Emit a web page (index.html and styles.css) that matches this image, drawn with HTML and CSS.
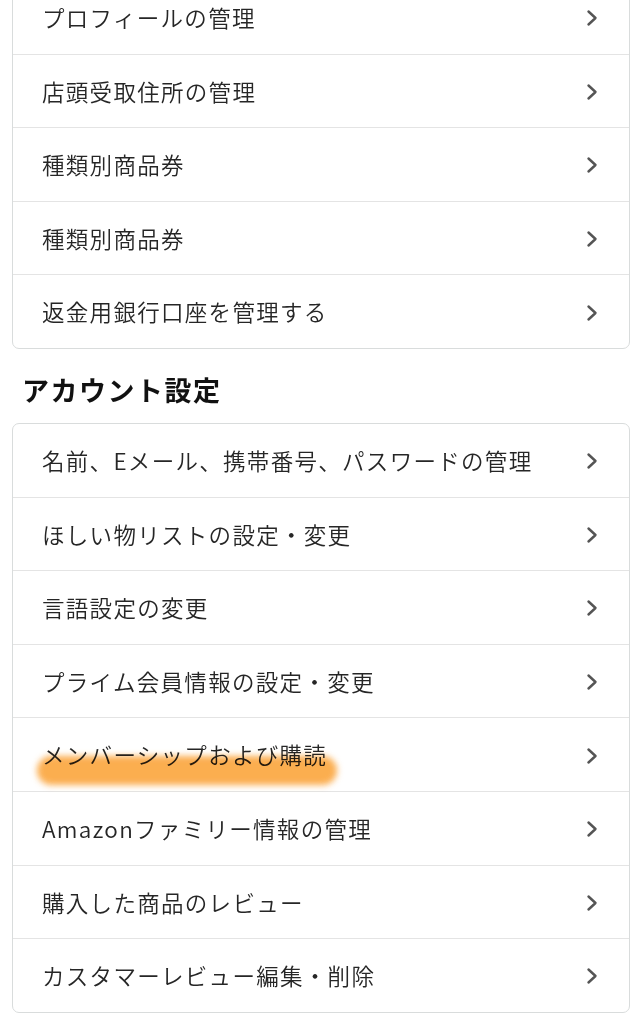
FILE: index.html
```html
<!DOCTYPE html>
<html lang="ja">
<head>
<meta charset="utf-8">
<title>アカウントサービス</title>
<link rel="stylesheet" href="styles.css">
</head>
<body>
<main class="page">
  <ul class="card card-first">
    <li class="row"><span class="label">プロフィールの管理</span><svg class="chev" viewBox="0 0 12 18"><path d="M2.5 2.5l7 6.5-7 6.5"/></svg></li>
    <li class="row"><span class="label">店頭受取住所の管理</span><svg class="chev" viewBox="0 0 12 18"><path d="M2.5 2.5l7 6.5-7 6.5"/></svg></li>
    <li class="row"><span class="label">種類別商品券</span><svg class="chev" viewBox="0 0 12 18"><path d="M2.5 2.5l7 6.5-7 6.5"/></svg></li>
    <li class="row"><span class="label">種類別商品券</span><svg class="chev" viewBox="0 0 12 18"><path d="M2.5 2.5l7 6.5-7 6.5"/></svg></li>
    <li class="row"><span class="label">返金用銀行口座を管理する</span><svg class="chev" viewBox="0 0 12 18"><path d="M2.5 2.5l7 6.5-7 6.5"/></svg></li>
  </ul>

  <h2 class="section-title">アカウント設定</h2>

  <ul class="card">
    <li class="row"><span class="label">名前、Eメール、携帯番号、パスワードの管理</span><svg class="chev" viewBox="0 0 12 18"><path d="M2.5 2.5l7 6.5-7 6.5"/></svg></li>
    <li class="row"><span class="label">ほしい物リストの設定・変更</span><svg class="chev" viewBox="0 0 12 18"><path d="M2.5 2.5l7 6.5-7 6.5"/></svg></li>
    <li class="row"><span class="label">言語設定の変更</span><svg class="chev" viewBox="0 0 12 18"><path d="M2.5 2.5l7 6.5-7 6.5"/></svg></li>
    <li class="row"><span class="label">プライム会員情報の設定・変更</span><svg class="chev" viewBox="0 0 12 18"><path d="M2.5 2.5l7 6.5-7 6.5"/></svg></li>
    <li class="row"><span class="label highlighted">メンバーシップおよび購読<span class="marker"></span></span><svg class="chev" viewBox="0 0 12 18"><path d="M2.5 2.5l7 6.5-7 6.5"/></svg></li>
    <li class="row"><span class="label">Amazonファミリー情報の管理</span><svg class="chev" viewBox="0 0 12 18"><path d="M2.5 2.5l7 6.5-7 6.5"/></svg></li>
    <li class="row"><span class="label">購入した商品のレビュー</span><svg class="chev" viewBox="0 0 12 18"><path d="M2.5 2.5l7 6.5-7 6.5"/></svg></li>
    <li class="row"><span class="label">カスタマーレビュー編集・削除</span><svg class="chev" viewBox="0 0 12 18"><path d="M2.5 2.5l7 6.5-7 6.5"/></svg></li>
  </ul>
</main>
</body>
</html>
```

FILE: styles.css
```css
html, body {
  margin: 0;
  padding: 0;
  background: #ffffff;
}

body {
  font-family: "Noto Sans CJK JP", "Noto Sans", "Liberation Sans", sans-serif;
  color: #222222;
  overflow: hidden;
}

.page {
  padding: 0 3px 0 12px;
}

.card {
  list-style: none;
  margin: 0;
  padding: 0;
  border: 1px solid #d9dcdc;
  border-radius: 7px;
  background: #ffffff;
}

.card-first {
  margin-top: -20px;
}

.row {
  height: 72.6px;
  display: flex;
  align-items: center;
  justify-content: space-between;
  padding: 0 31px 0 29px;
  border-bottom: 1px solid #e4e4e4;
}

.row:last-child {
  border-bottom: none;
}

.label {
  font-size: 22.5px;
  font-weight: 350;
  letter-spacing: 1.3px;
  line-height: 1;
  color: #262626;
  white-space: nowrap;
}

.highlighted {
  position: relative;
}

.marker {
  position: absolute;
  left: -5px;
  top: 13px;
  width: 300px;
  height: 29px;
  border-radius: 15px;
  background: #fba53c;
  filter: blur(3px);
  opacity: 0.9;
  mix-blend-mode: multiply;
}

.chev {
  width: 12px;
  height: 18px;
  flex: none;
  margin-top: 2px;
}

.chev path {
  fill: none;
  stroke: #555555;
  stroke-width: 2.4;
  stroke-linecap: round;
  stroke-linejoin: round;
}

.section-title {
  margin: 24px 0 16px 10px;
  font-size: 27px;
  line-height: 34px;
  font-weight: 700;
  color: #111111;
  letter-spacing: 1.5px;
}
```
